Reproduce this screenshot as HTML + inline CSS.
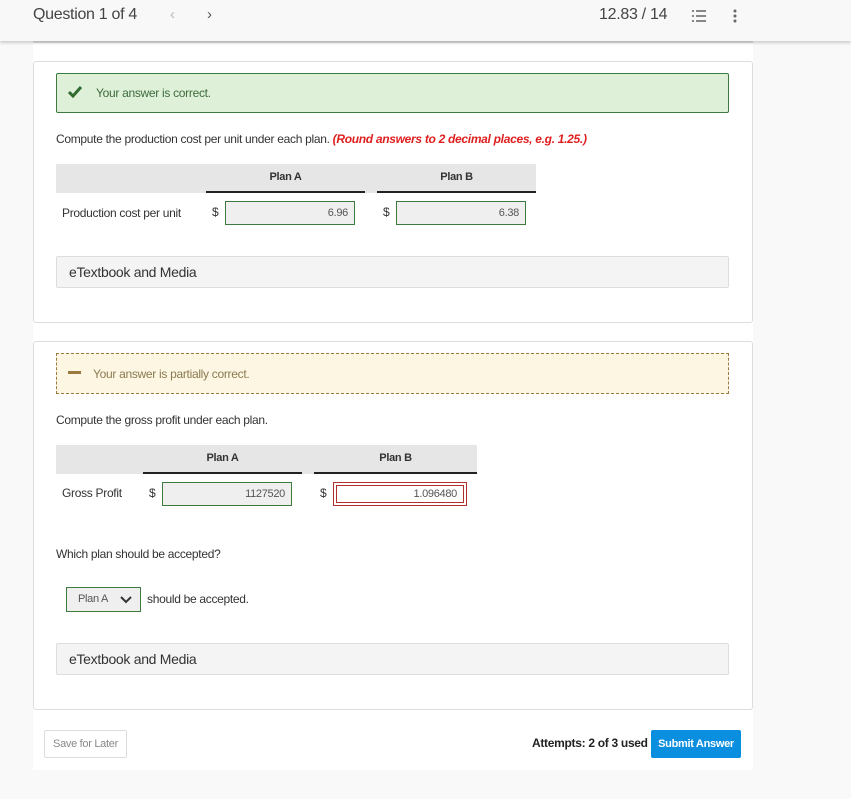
<!DOCTYPE html>
<html><head><meta charset="utf-8"><style>
*{box-sizing:border-box;margin:0;padding:0}
body{width:851px;height:799px;background:#f9f9f9;font-family:"Liberation Sans",sans-serif;color:#333;position:relative;overflow:hidden;font-size:12px;letter-spacing:-0.3px}
.abs{position:absolute}
.hdr{left:0;top:0;width:851px;height:41px;background:#f8f8f8;box-shadow:0 2px 3px rgba(0,0,0,.18);z-index:2}
.card{background:#fff;border:1px solid #ddd;border-radius:3px}
.th{background:#e6e6e6}
.inp{background:#efefef;border:1px solid #3d7a3d;text-align:right;font-size:11px;padding-right:6px;color:#555}
.ul{border-bottom:2px solid #222}
.etb{background:#f4f4f4;border:1px solid #ddd;border-radius:2px;font-size:14px;padding-left:12px;line-height:30px;color:#333}
</style></head><body>
<div class="abs hdr">
<div class="abs" style="left:33px;top:6px;font-size:16px;color:#444">Question 1 of 4</div>
<div class="abs" style="left:170px;top:6px;font-size:15px;color:#bbb">&lsaquo;</div>
<div class="abs" style="left:207px;top:6px;font-size:15px;color:#555">&rsaquo;</div>
<div class="abs" style="left:599px;top:6px;font-size:16px;color:#444">12.83 / 14</div>
<svg class="abs" style="left:692px;top:9px" width="14" height="14"><g fill="#888"><rect x="0" y="1" width="2" height="2"/><rect x="4" y="1" width="10" height="2"/><rect x="0" y="6" width="2" height="2"/><rect x="4" y="6" width="10" height="2"/><rect x="0" y="11" width="2" height="2"/><rect x="4" y="11" width="10" height="2"/></g></svg>
<svg class="abs" style="left:733px;top:9px" width="4" height="14"><g fill="#666"><circle cx="2" cy="2" r="1.5"/><circle cx="2" cy="7" r="1.5"/><circle cx="2" cy="12" r="1.5"/></g></svg>
</div>
<div class="abs" style="left:33px;top:41px;width:720px;height:729px;background:#fff"></div>
<div class="abs" style="left:33px;top:41px;width:720px;height:2px;background:#ddd"></div>
<div class="abs card" style="left:33px;top:61px;width:720px;height:262px"></div>
<div class="abs" style="left:56px;top:73px;width:673px;height:40px;background:#dff0d8;border:1px solid #3d7a3d;border-radius:2px"></div>
<svg class="abs" style="left:68px;top:86px" width="14" height="12"><path d="M1 6L5 10L13 1" fill="none" stroke="#2f6a2f" stroke-width="3"/></svg>
<div class="abs" style="left:96px;top:86px;color:#3d6b3d">Your answer is correct.</div>
<div class="abs" style="left:56px;top:132px">Compute the production cost per unit under each plan. <b style="color:#e02020;font-style:italic">(Round answers to 2 decimal places, e.g. 1.25.)</b></div>
<div class="abs th" style="left:56px;top:164px;width:480px;height:29px"></div>
<div class="abs ul" style="left:206px;top:164px;width:159px;height:29px;text-align:center;font-weight:bold;line-height:27px;font-size:11px">Plan A</div>
<div class="abs ul" style="left:377px;top:164px;width:159px;height:29px;text-align:center;font-weight:bold;line-height:27px;font-size:11px">Plan B</div>
<div class="abs" style="left:62px;top:206px">Production cost per unit</div>
<div class="abs" style="left:212px;top:205px">$</div>
<div class="abs inp" style="left:225px;top:201px;width:130px;height:24px;line-height:22px">6.96</div>
<div class="abs" style="left:383px;top:205px">$</div>
<div class="abs inp" style="left:396px;top:201px;width:130px;height:24px;line-height:22px">6.38</div>
<div class="abs etb" style="left:56px;top:256px;width:673px;height:32px">eTextbook and Media</div>

<div class="abs card" style="left:33px;top:341px;width:720px;height:369px"></div>
<div class="abs" style="left:56px;top:353px;width:673px;height:41px;background:#fdf6e3;border:1px dashed #9b7a40"></div>
<div class="abs" style="left:68px;top:371px;width:13px;height:3px;background:#9b7a40"></div>
<div class="abs" style="left:93px;top:367px;color:#8a7a50">Your answer is partially correct.</div>
<div class="abs" style="left:56px;top:413px">Compute the gross profit under each plan.</div>
<div class="abs th" style="left:56px;top:445px;width:421px;height:29px"></div>
<div class="abs ul" style="left:143px;top:445px;width:159px;height:29px;text-align:center;font-weight:bold;line-height:27px;font-size:11px">Plan A</div>
<div class="abs ul" style="left:314px;top:445px;width:163px;height:29px;text-align:center;font-weight:bold;line-height:27px;font-size:11px">Plan B</div>
<div class="abs" style="left:62px;top:486px">Gross Profit</div>
<div class="abs" style="left:149px;top:486px">$</div>
<div class="abs inp" style="left:162px;top:482px;width:130px;height:24px;line-height:22px">1127520</div>
<div class="abs" style="left:320px;top:486px">$</div>
<div class="abs" style="left:333px;top:482px;width:134px;height:24px;border:1px solid #b03030;padding:2px"><div style="border:1px solid #b03030;height:18px;text-align:right;padding-right:6px;font-size:11px;line-height:16px;color:#555">1.096480</div></div>
<div class="abs" style="left:56px;top:547px">Which plan should be accepted?</div>
<div class="abs" style="left:66px;top:587px;width:75px;height:25px;border:1px solid #3d7a3d;background:#efefef;font-size:11px;line-height:23px;padding-left:11px;color:#555">Plan A</div>
<svg class="abs" style="left:120px;top:596px" width="12" height="8"><path d="M1 1L6 6L11 1" fill="none" stroke="#333" stroke-width="2"/></svg>
<div class="abs" style="left:147px;top:592px">should be accepted.</div>
<div class="abs etb" style="left:56px;top:643px;width:673px;height:32px">eTextbook and Media</div>

<div class="abs" style="left:44px;top:730px;width:83px;height:28px;border:1px solid #ddd;border-radius:2px;font-size:11px;color:#888;text-align:center;line-height:26px">Save for Later</div>
<div class="abs" style="left:532px;top:736px;font-weight:bold;color:#222">Attempts: 2 of 3 used</div>
<div class="abs" style="left:651px;top:730px;width:90px;height:28px;background:#0a8ee0;border-radius:2px;color:#fff;font-size:11px;text-align:center;line-height:28px;font-weight:bold">Submit Answer</div>
</body></html>
